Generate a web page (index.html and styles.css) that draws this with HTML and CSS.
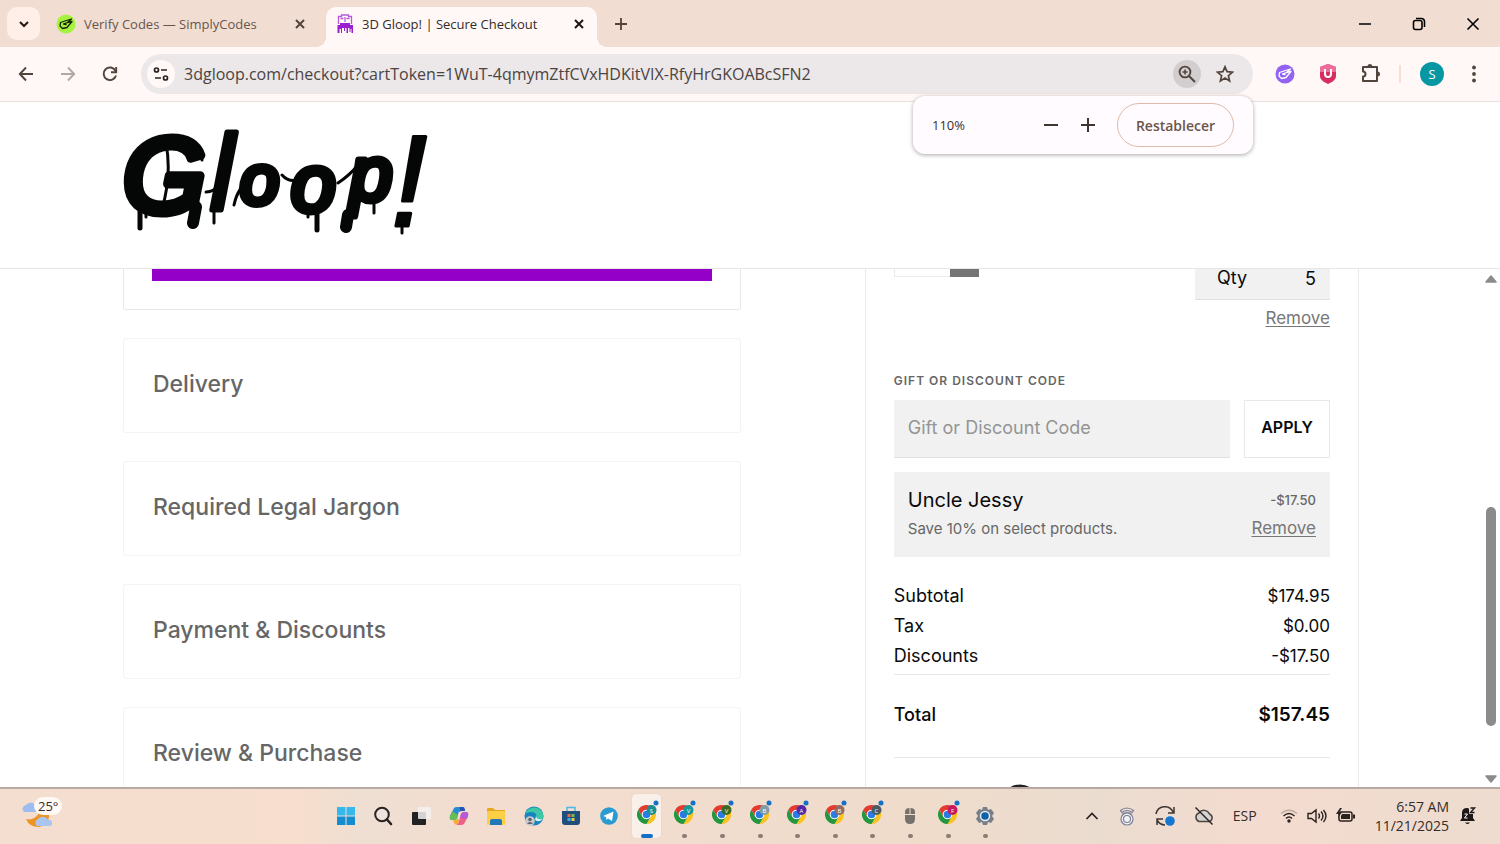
FILE: index.html
```html
<!DOCTYPE html>
<html lang="en">

<head>
    <meta charset="UTF-8" />
    <title>3D Gloop! | Secure Checkout</title>
    <link rel="stylesheet" href="styles.css">
</head>

<body>
    <!-- shared shapes -->
    <svg class="defs" aria-hidden="true">
        <symbol id="chrome" viewBox="0 0 48 48">
            <circle cx="24" cy="24" r="13" fill="#fff" />
            <path fill="#e33b2e" d="M24 12H44.8A24 24 0 0 0 3.2 12L13.6 30A12 12 0 0 1 24 12Z" />
            <path fill="#fcc31e" d="M34.4 30 24 48A24 24 0 0 0 44.8 12H24A12 12 0 0 1 34.4 30Z" />
            <path fill="#23963f" d="M13.6 30 3.2 12A24 24 0 0 0 24 48L34.4 30A12 12 0 0 1 13.6 30Z" />
            <circle cx="24" cy="24" r="9.5" fill="#2a7be4" />
        </symbol>
        <symbol id="hand" viewBox="0 0 20 20">
            <path fill="none" stroke="currentColor" stroke-width="1.3" stroke-linejoin="round" stroke-linecap="round" d="M9 7 4.500 8.500 4 12 6.500 14.500 11 13.500 13.500 10.500M9 7 15.500 5 11.500 8.500 16 7.500 13.500 10.500M11.500 8.500 7.500 10 10 10.500" />
        </symbol>
    </svg>

    <!-- tabs -->
    <div class="tab-strip">
        <button class="tab-search" aria-label="Search tabs">
            <svg width="12" height="12" viewBox="0 0 12 12"><path d="M2 4l4 4 4-4" fill="none" stroke="#221a16" stroke-width="2" /></svg>
        </button>
        <div class="tab">
            <svg class="favicon lime" width="20" height="20" viewBox="0 0 20 20"><circle cx="10" cy="10" r="9.500" fill="#a6f23c" /><use href="#hand" width="20" height="20" /></svg>
            <span class="tab-title">Verify Codes — SimplyCodes</span>
            <button class="close" aria-label="Close tab"><svg width="12" height="12" viewBox="0 0 12 12"><path d="M2 2l8 8M10 2l-8 8" stroke="#51443c" stroke-width="2" /></svg></button>
        </div>
        <div class="tab active">
            <svg class="favicon" width="18" height="20" viewBox="0 0 18 20">
                <path d="M2.500 10V2.500h3V1h7v1.500h3V10M4.500 4.500h3M10.500 4.500h3M9 3v5" fill="none" stroke="#b35cda" stroke-width="1.300" />
                <path d="M4 9h10v2h3v8h-1.500v-4h-1v3h-1v-4h-1.500v5h-1.500v-5H9v3H8v-3H6v5H5v-4H3.500v4H1.500v-8h2.500Z" fill="#9a1fd0" />
            </svg>
            <span class="tab-title">3D Gloop! | Secure Checkout</span>
            <button class="close" aria-label="Close tab"><svg width="12" height="12" viewBox="0 0 12 12"><path d="M2 2l8 8M10 2l-8 8" stroke="#1c1512" stroke-width="2" /></svg></button>
        </div>
        <button class="new-tab" aria-label="New tab">
            <svg width="14" height="14" viewBox="0 0 14 14"><path d="M7 1v12M1 7h12" stroke="#51443c" stroke-width="1.800" /></svg>
        </button>
        <div class="window-buttons">
            <button aria-label="Minimize"><svg width="14" height="14" viewBox="0 0 14 14"><path d="M1 7h12" stroke="#000" stroke-width="1.500" /></svg></button>
            <button aria-label="Restore"><svg width="14" height="14" viewBox="0 0 14 14"><rect x="1.500" y="3.500" width="8.500" height="9" rx="2" fill="none" stroke="#000" stroke-width="1.600" /><path d="M4 1.500h5.500a3 3 0 0 1 3 3V10" fill="none" stroke="#000" stroke-width="1.600" /></svg></button>
            <button aria-label="Close"><svg width="14" height="14" viewBox="0 0 14 14"><path d="M1.500 1.500l11 11M12.500 1.500l-11 11" stroke="#000" stroke-width="1.600" /></svg></button>
        </div>
    </div>

    <!-- toolbar -->
    <div class="toolbar">
        <div class="nav">
            <button aria-label="Back"><svg width="16" height="16" viewBox="0 0 16 16"><path d="M15 8H2M8 1.500 1.800 8 8 14.500" fill="none" stroke="#51443c" stroke-width="1.900" /></svg></button>
            <button aria-label="Forward"><svg width="16" height="16" viewBox="0 0 16 16"><path d="M1 8h13M8 1.500 14.200 8 8 14.500" fill="none" stroke="#b1a8a4" stroke-width="1.900" /></svg></button>
            <button aria-label="Reload"><svg width="16" height="16" viewBox="0 0 16 16"><path d="M14 9.500A6.300 6.300 0 1 1 13.500 4.800L14 6" fill="none" stroke="#51443c" stroke-width="1.900" /><path d="M14.200 1v5.200H9" fill="none" stroke="#51443c" stroke-width="1.900" /></svg></button>
        </div>
        <div class="address">
            <button class="site-info" aria-label="Site information">
                <svg width="16" height="16" viewBox="0 0 16 16" fill="none" stroke="#2a2321" stroke-width="1.700"><circle cx="3.500" cy="4" r="2" /><path d="M8 4h6M2 12h6" /><circle cx="12.500" cy="12" r="2" /></svg>
            </button>
            <input class="url" type="text" aria-label="Address" value="3dgloop.com/checkout?cartToken=1WuT-4qmymZtfCVxHDKitVIX-RfyHrGKOABcSFN2">
            <button class="zoom-button" aria-label="Zoom">
                <svg width="18" height="18" viewBox="0 0 18 18" fill="none" stroke="#51443c" stroke-width="1.900"><circle cx="7" cy="7" r="5.400" /><path d="M11 11l6 6" /><path d="M7 4.500v5M4.500 7h5" stroke-width="1.500" /></svg>
            </button>
            <button class="star" aria-label="Bookmark">
                <svg width="18" height="18" viewBox="0 0 18 18"><path d="M9 1.800l2.100 4.900 5.300.5-4 3.500 1.200 5.200L9 13.100l-4.600 2.800 1.200-5.200-4-3.500 5.300-.5Z" fill="none" stroke="#51443c" stroke-width="1.700" /></svg>
            </button>
        </div>
        <div class="extensions">
            <button aria-label="SimplyCodes"><svg class="white" width="20" height="20" viewBox="0 0 20 20"><circle cx="10" cy="10" r="9.500" fill="#9262f3" /><use href="#hand" width="20" height="20" /></svg></button>
            <button aria-label="Shield"><svg width="18" height="20" viewBox="0 0 18 20"><path d="M9 0l8 3v9c0 4-4 6-8 8-4-2-8-4-8-8V3Z" fill="#d62c62" /><path d="M9 0l8 3v5H1V3Z" fill="#ee6e9a" /><path d="M6 5v5a3 3 0 0 0 6 0V5" fill="none" stroke="#fff" stroke-width="2" /></svg></button>
            <button class="puzzle" aria-label="Extensions"><svg width="20" height="20" viewBox="0 0 20 20"><path d="M2 3h14v14H2v-4.500a2.500 2.500 0 0 0 0-5Z" fill="none" stroke="#51443c" stroke-width="2" stroke-linejoin="round" /><path d="M6.500 2.500a2.500 2.500 0 0 1 5 0ZM16.500 7.500a2.500 2.500 0 0 1 0 5Z" fill="#51443c" /></svg></button>
            <span class="divider"></span>
            <button class="profile" aria-label="Profile">S</button>
            <button class="menu" aria-label="Menu"><svg width="4" height="18" viewBox="0 0 4 18" fill="#51443c"><circle cx="2" cy="2.500" r="1.900" /><circle cx="2" cy="9" r="1.900" /><circle cx="2" cy="15.500" r="1.900" /></svg></button>
        </div>
        <!-- zoom bubble -->
        <div class="zoom-bubble">
            <span>110%</span>
            <button class="step" aria-label="Zoom out"><svg width="16" height="16" viewBox="0 0 16 16"><path d="M1 8h14" stroke="#40342f" stroke-width="2" /></svg></button>
            <button class="step" aria-label="Zoom in"><svg width="16" height="16" viewBox="0 0 16 16"><path d="M1 8h14M8 1v14" stroke="#40342f" stroke-width="2" /></svg></button>
            <button class="reset">Restablecer</button>
        </div>
    </div>

    <header class="site-header">
        <a href="#" aria-label="Gloop!">
            <svg class="logo" width="304" height="108" viewBox="0 0 304 108">
                <g class="logo-text">
                    <text x="-1" y="83" font-size="106" stroke-width="9">G</text>
                    <text x="86" y="81" font-size="108" stroke-width="5">l</text>
                    <text x="116" y="75" font-size="70" stroke-width="7">o</text>
                    <text x="167" y="82" font-size="80" stroke-width="7">o</text>
                    <text x="226" y="71" font-size="76" stroke-width="7">p</text>
                    <text x="267" y="97" font-size="130" stroke-width="3">!</text>
                </g>
                <!-- drips -->
                <g fill="none" stroke="#050606" stroke-linecap="round">
                    <path d="M16 82v17M193 84v17" stroke-width="5" />
                    <path d="M72 78 69 94M224 86 222 98" stroke-width="12" />
                    <path d="M90 80v14M22 84v4M144 46v10M184 84v4M250 72v12M278 98v6M78 22v9" stroke-width="3" />
                    <path d="M42 14q6 32-4 66M82 63q8 0 14-8M110 76q4-18 14-22M158 46q9 10 22 2M214 54q12-8 20-18" stroke-width="3" />
                </g>
            </svg>
        </a>
    </header>

    <div class="page">
        <main class="checkout">
            <div class="steps">
                <section class="step-card current">
                    <button class="continue" aria-label="Continue"></button>
                </section>
                <section class="step-card"><h2>Delivery</h2></section>
                <section class="step-card"><h2>Required Legal Jargon</h2></section>
                <section class="step-card"><h2>Payment &amp; Discounts</h2></section>
                <section class="step-card"><h2>Review &amp; Purchase</h2></section>
            </div>

            <aside class="summary">
                <div class="item">
                    <div class="thumb"><span></span></div>
                    <div class="item-side">
                        <div class="qty">
                            <label for="qty">Qty</label>
                            <input id="qty" type="text" value="5">
                        </div>
                        <a class="remove" href="#">Remove</a>
                    </div>
                </div>

                <label class="code-label" for="code">GIFT OR DISCOUNT CODE</label>
                <div class="code-row">
                    <input id="code" type="text" placeholder="Gift or Discount Code">
                    <button>APPLY</button>
                </div>

                <div class="discount">
                    <div class="discount-line">
                        <span class="discount-name">Uncle Jessy</span>
                        <span class="discount-amount">-$17.50</span>
                    </div>
                    <div class="discount-line">
                        <span class="discount-note">Save 10% on select products.</span>
                        <a class="remove" href="#">Remove</a>
                    </div>
                </div>

                <table class="totals">
                    <tr><th>Subtotal</th><td>$174.95</td></tr>
                    <tr><th>Tax</th><td>$0.00</td></tr>
                    <tr class="last"><th>Discounts</th><td>-$17.50</td></tr>
                    <tr class="total"><th>Total</th><td>$157.45</td></tr>
                </table>
                <svg class="seal" width="40" height="40" viewBox="0 0 40 40"><circle cx="20" cy="20" r="18" fill="none" stroke="#222" stroke-width="3" /></svg>
            </aside>
        </main>

        <div class="scrollbar">
            <svg width="12" height="8" viewBox="0 0 12 8"><path d="M6 1l5 6H1Z" fill="#8b8b8b" stroke="#8b8b8b" stroke-width="1.500" stroke-linejoin="round" /></svg>
            <div class="track"><div class="scroll-thumb"></div></div>
            <svg width="12" height="8" viewBox="0 0 12 8"><path d="M6 7l5-6H1Z" fill="#8b8b8b" stroke="#8b8b8b" stroke-width="1.500" stroke-linejoin="round" /></svg>
        </div>
    </div>

    <!-- taskbar -->
    <footer class="taskbar">
        <div class="weather">
            <svg width="32" height="32" viewBox="0 0 32 32">
                <path d="M4 12a4 4 0 0 1 2-7 6 6 0 0 1 10 1v6Z" fill="#9dbdf0" />
                <path d="M6 19q8 2 13-6h10q1 12-10 14-10 0-13-8Z" fill="#ee9425" />
                <path d="M17 26a4 4 0 0 1 1-7 6 6 0 0 1 10 1 3 3 0 0 1 2 6Z" fill="#a9c5f0" />
            </svg>
            <span class="temp">25°</span>
        </div>

        <nav class="apps">
            <button aria-label="Start"><svg width="20" height="20" viewBox="0 0 20 20"><path d="M1 1h8.500v8.500H1ZM10.500 1H19v8.500h-8.500Z" fill="#35b8ee" /><path d="M1 10.500h8.500V19H1ZM10.500 10.500H19V19h-8.500Z" fill="#138dd0" /></svg></button>
            <button aria-label="Search"><svg width="20" height="20" viewBox="0 0 20 20"><circle cx="9" cy="8.500" r="6.800" fill="#eee3dd" stroke="#29221f" stroke-width="2" /><path d="M14 13.500l4 4.500" stroke="#29221f" stroke-width="2.600" stroke-linecap="round" /></svg></button>
            <button aria-label="Task view"><svg width="20" height="20" viewBox="0 0 20 20"><rect x="1" y="6" width="14" height="13" rx="1" fill="#222" /><rect x="7" y="1" width="13" height="12" rx="1" fill="#f4f2f1" fill-opacity=".85" /></svg></button>
            <button aria-label="Copilot"><svg width="20" height="20" viewBox="0 0 20 20"><path d="M5 2q1-1 3-1h6q-3 0-4 4L8 12q-1 2-3 2H3q-3 0-2-4Z" fill="#268cd8" /><path d="M1 10l2-5 6 4-1 4q-1 1-3 1H3q-3 0-2-4Z" fill="#66bd57" /><path d="M15 18q-1 1-3 1H6q3 0 4-4l2-7q1-2 3-2h2q3 0 2 4Z" fill="#ef5e86" /><path d="M12 8q1-2 3-2h2q3 0 2 4l-1 3-7-1Z" fill="#b45bd7" /><path d="M10 15l-1 3q-2 2-4-1l-1-3h2q2 0 3-2Z" fill="#f5ac3b" /><path d="M11 1h3q2 0 2 4h-3q-2 0-3 1Z" fill="#2554b4" /></svg></button>
            <button aria-label="File Explorer"><svg width="20" height="20" viewBox="0 0 20 20"><path d="M1 3q0-1 1-1h5l2 2h10v14H1Z" fill="#e7a61c" /><rect x="1" y="5" width="18" height="14" rx="1" fill="#fdcf45" /><path d="M4 19v-4q0-2 2-2h8q2 0 2 2v4Z" fill="#2378b9" /></svg></button>
            <button aria-label="Edge"><svg width="20" height="20" viewBox="0 0 20 20"><circle cx="10" cy="10" r="9.500" fill="#1684bf" /><path d="M1 8a9.500 9.500 0 0 1 18.500 2q0 4-4 4-4 0-3-3 0-5-5-5-4 0-6.500 2Z" fill="#3cc8a4" /><path d="M12 10q1 4 7 3-4 4-8 1Z" fill="#d7f2ed" /><circle cx="6" cy="15" r="4.800" fill="#c8c9cc" /><circle cx="6" cy="13.500" r="1.800" fill="#62646a" /><path d="M3 18q3-4 6 0Z" fill="#62646a" /></svg></button>
            <button aria-label="Store"><svg width="20" height="20" viewBox="0 0 20 20"><path d="M6 5V1.500h8V5" fill="none" stroke="#4db9e6" stroke-width="1.500" /><path d="M1 5h18v11q0 3-3 3H4q-3 0-3-3Z" fill="#204e7c" /><path d="M6.500 8h3v3h-3Z" fill="#ed6844" /><path d="M10.500 8h3v3h-3Z" fill="#79bd49" /><path d="M6.500 12h3v3h-3Z" fill="#40acec" /><path d="M10.500 12h3v3h-3Z" fill="#f4c645" /></svg></button>
            <button aria-label="Telegram"><svg width="20" height="20" viewBox="0 0 20 20"><circle cx="10" cy="10" r="8.800" fill="#289bd3" /><path d="M4 10l10.500-4.500-1.500 9.500-4-2.500L7.500 14l-.5-3Z" fill="#fff" /></svg></button>
            <button class="running open" aria-label="Chrome S"><svg width="24" height="28" viewBox="0 0 24 28"><use href="#chrome" x="2" y="6" width="19" height="19" /><circle cx="16.500" cy="11" r="5" fill="#1b8f91" /><text x="16.500" y="13.500">S</text><circle cx="21" cy="4" r="2.500" fill="#1470c8" /></svg></button>
            <button class="running" aria-label="Chrome V"><svg width="24" height="28" viewBox="0 0 24 28"><use href="#chrome" x="2" y="6" width="19" height="19" /><circle cx="16.500" cy="11" r="5" fill="#14999b" /><text x="16.500" y="13.500">V</text><circle cx="21" cy="4" r="2.500" fill="#1470c8" /></svg></button>
            <button class="running" aria-label="Chrome V"><svg width="24" height="28" viewBox="0 0 24 28"><use href="#chrome" x="2" y="6" width="19" height="19" /><circle cx="16.500" cy="11" r="5" fill="#386a20" /><text x="16.500" y="13.500">V</text><circle cx="21" cy="4" r="2.500" fill="#1470c8" /></svg></button>
            <button class="running" aria-label="Chrome B"><svg width="24" height="28" viewBox="0 0 24 28"><use href="#chrome" x="2" y="6" width="19" height="19" /><circle cx="16.500" cy="11" r="5" fill="#829ca6" /><text x="16.500" y="13.500">B</text><circle cx="21" cy="4" r="2.500" fill="#1470c8" /></svg></button>
            <button class="running" aria-label="Chrome A"><svg width="24" height="28" viewBox="0 0 24 28"><use href="#chrome" x="2" y="6" width="19" height="19" /><circle cx="16.500" cy="11" r="5" fill="#5427a6" /><text x="16.500" y="13.500">A</text><circle cx="21" cy="4" r="2.500" fill="#1470c8" /></svg></button>
            <button class="running" aria-label="Chrome B"><svg width="24" height="28" viewBox="0 0 24 28"><use href="#chrome" x="2" y="6" width="19" height="19" /><circle cx="16.500" cy="11" r="5" fill="#956b60" /><text x="16.500" y="13.500">B</text><circle cx="21" cy="4" r="2.500" fill="#1470c8" /></svg></button>
            <button class="running" aria-label="Chrome C"><svg width="24" height="28" viewBox="0 0 24 28"><use href="#chrome" x="2" y="6" width="19" height="19" /><circle cx="16.500" cy="11" r="5" fill="#4b5b63" /><text x="16.500" y="13.500">C</text><circle cx="21" cy="4" r="2.500" fill="#1470c8" /></svg></button>
            <button class="running" aria-label="Mouse"><svg width="20" height="20" viewBox="0 0 20 20" fill="#77716b"><path d="M9.500 2v6H5V6q0-4 4.500-4ZM10.500 2v6H15V6q0-4-4.500-4ZM5 9h10v4q0 5-5 5t-5-5Z" /></svg></button>
            <button class="running" aria-label="Chrome F"><svg width="24" height="28" viewBox="0 0 24 28"><use href="#chrome" x="2" y="6" width="19" height="19" /><circle cx="16.500" cy="11" r="5" fill="#c51a60" /><text x="16.500" y="13.500">F</text><circle cx="21" cy="4" r="2.500" fill="#1470c8" /></svg></button>
            <button class="running" aria-label="Settings"><svg width="20" height="20" viewBox="0 0 20 20"><path d="M8 1h4l1 3 3-1 3 4-2 3 2 3-3 4-3-1-1 3H8l-1-3-3 1-3-4 2-3-2-3 3-4 3 1Z" fill="#777f88" /><circle cx="10" cy="10" r="4.500" fill="#1261a5" stroke="#e2edf5" stroke-width="1.500" /></svg></button>
        </nav>

        <div class="tray">
            <button aria-label="Show hidden icons"><svg width="14" height="14" viewBox="0 0 14 14"><path d="M1.500 10 7 4.500l5.500 5.500" fill="none" stroke="#29221f" stroke-width="1.700" /></svg></button>
            <button aria-label="Webcam"><svg width="18" height="20" viewBox="0 0 18 20" fill="none" stroke="#7b8098" stroke-width="1.200"><circle cx="9" cy="13" r="6" fill="#f4f1f5" /><circle cx="9" cy="13" r="3.500" /><path d="M2.500 4.500q6.500-5 13 0l-1.500 2q-5-4-10 0ZM4.500 8q4.500-3 9 0" /></svg></button>
            <button aria-label="Update"><svg width="20" height="20" viewBox="0 0 20 20" fill="none" stroke="#3d3532" stroke-width="1.500"><path d="M1 8a9 9 0 0 1 17-2M19 1v6h-6M2 19v-6h6M2 14q3 5 8 5" /><circle cx="15" cy="15" r="4.800" fill="#1676d1" stroke="none" /></svg></button>
            <button aria-label="OneDrive"><svg width="20" height="20" viewBox="0 0 20 20"><path d="M5 15.500a4.500 4.500 0 0 1 0-8.500 6 6 0 0 1 10.500 1 4 4 0 0 1 0 7.500Z" fill="#d4d1cf" stroke="#4b4542" stroke-width="1.500" /><path d="M1.500 1.500l17 17" stroke="#29221f" stroke-width="1.500" /></svg></button>
            <button class="lang">ESP</button>
            <button class="status" aria-label="Network, volume, battery">
                <svg width="18" height="18" viewBox="0 0 18 18" fill="none" stroke="#29221f" stroke-width="1.400"><path d="M1 6.500q8-6.500 16 0" stroke="#b9aaa1" /><path d="M3.500 9q5.500-5 11 0M6 11.500q3-3 6 0" /><circle cx="9" cy="14" r="1" fill="#29221f" /></svg>
                <svg width="20" height="18" viewBox="0 0 20 18" fill="none" stroke="#29221f" stroke-width="1.400"><path d="M1 6.500h3.500L9 3v12l-4.500-3.500H1ZM11.500 6.500q2 2.500 0 5M14 4.500q4 4.500 0 9M16.500 3q5 6 0 12" /></svg>
                <svg width="20" height="18" viewBox="0 0 20 18"><rect x="3" y="5" width="13" height="9" rx="2" fill="none" stroke="#29221f" stroke-width="1.500" /><path d="M6 7h8v5H5V9ZM17 7.500h2v4h-2Z" fill="#29221f" /><path d="M4 1 0 7h3l-1 4 4-6H3.500L6 1Z" fill="#29221f" /></svg>
            </button>
            <button class="clock"><span>6:57 AM</span><span>11/21/2025</span></button>
            <button aria-label="Notifications"><svg width="18" height="20" viewBox="0 0 18 20"><path d="M1 15l2-3V7q0-5 5-5 1 0 2 .5V8h4v4l2 3Z" fill="#1d1817" /><path d="M6 16.500h5q-2.500 3-5 0Z" fill="#1d1817" /><path d="M11.500 2h4l-4 4.500h4" fill="none" stroke="#1d1817" stroke-width="1.400" /><path d="M5.500 8h3l-3 4h3" fill="none" stroke="#fff" stroke-width="1" /></svg></button>
        </div>
    </footer>
</body>

</html>
```

FILE: styles.css
```css
* {
    box-sizing: border-box;
}

body {
    margin: 0;
    height: 100vh;
    display: flex;
    flex-direction: column;
    overflow: hidden;
    background: #fff;
    font-family: Inter, "Liberation Sans", sans-serif;
}

button {
    padding: 0;
    border: none;
    background: none;
    font: inherit;
    color: inherit;
    cursor: pointer;
}

button,
svg {
    flex: none;
}

svg {
    display: block;
}

.defs {
    position: absolute;
    width: 0;
    height: 0;
}

.tab-strip,
.toolbar,
.taskbar {
    flex: none;
    display: flex;
    align-items: center;
    font-family: "Open Sans", "Noto Sans", sans-serif;
}

/* tabs */
.tab-strip {
    height: 47px;
    padding-left: 7px;
    background: #f2ddd3;
    font-size: 13px;
}

.tab-search {
    width: 33px;
    height: 33px;
    border-radius: 10px;
    background: #ffefe8;
    display: grid;
    place-items: center;
}

.tab {
    display: flex;
    align-items: center;
    height: 40px;
    width: 271px;
    margin-top: 7px;
    padding: 0 12px 6px 10px;
    color: #67564d;
}

.tab:not(.active) {
    margin-left: 6px;
    width: 280px;
    padding: 0 20px 6px 10px;
}

.tab.active {
    position: relative;
    border-radius: 10px 10px 0 0;
    background: #fff8f6;
    color: #342b27;
}

.tab.active::before,
.tab.active::after {
    content: "";
    position: absolute;
    bottom: 0;
    width: 10px;
    height: 10px;
}

.tab.active::before {
    right: 100%;
    background: radial-gradient(circle at 0 0, transparent 10px, #fff8f6 10px);
}

.tab.active::after {
    left: 100%;
    background: radial-gradient(circle at 100% 0, transparent 10px, #fff8f6 10px);
}

.lime {
    color: #17220b;
}

.white {
    color: #fff;
}

.tab-title {
    flex: 1;
    margin-left: 8px;
    white-space: nowrap;
}

.new-tab {
    margin-left: 17px;
}

.window-buttons {
    margin-left: auto;
    display: flex;
}

.window-buttons button {
    width: 54px;
    height: 47px;
    display: grid;
    place-items: center;
}

/* toolbar */
.toolbar {
    position: relative;
    height: 55px;
    padding-right: 22px;
    background: #fff8f6;
    border-bottom: 1px solid #e8e2df;
}

.nav {
    display: flex;
    gap: 26px;
    padding: 0 23px 0 18px;
}

.address {
    flex: 1;
    display: flex;
    align-items: center;
    height: 40px;
    padding: 0 14px 0 6px;
    border-radius: 20px;
    background: #ece7e8;
}

.site-info,
.zoom-button,
.star {
    width: 28px;
    height: 28px;
    border-radius: 14px;
    display: grid;
    place-items: center;
}

.site-info {
    background: #fff8f6;
}

.zoom-button {
    margin-right: 10px;
    background: #d2cdce;
}

.url {
    flex: 1;
    min-width: 0;
    padding: 0;
    margin-left: 9px;
    border: none;
    background: none;
    font-family: inherit;
    font-size: 16px;
    color: #4b4442;
}

.extensions {
    display: flex;
    align-items: center;
    padding-left: 22px;
}

.extensions button {
    margin-right: 24px;
}

.extensions .puzzle {
    margin-right: 18px;
}

.divider {
    width: 2px;
    height: 18px;
    margin-right: 19px;
    background: #f9ded1;
}

.extensions .profile {
    width: 24px;
    height: 24px;
    border-radius: 12px;
    background: #0797a2;
    color: #fff;
    font-size: 13px;
    margin-right: 28px;
}

.extensions .menu {
    margin-right: 2px;
}

.zoom-bubble {
    position: absolute;
    top: 49px;
    right: 247px;
    z-index: 2;
    display: flex;
    align-items: center;
    width: 340px;
    height: 58px;
    padding: 0 19px;
    border-radius: 12px;
    background: #fffbff;
    box-shadow: 0 1px 4px rgba(0, 0, 0, 0.35);
    font-size: 13px;
    color: #3b302b;
}

.zoom-bubble span {
    flex: 1;
}

.step {
    margin-right: 21px;
}

.reset {
    width: 117px;
    height: 44px;
    border: 1px solid #dfbbaa;
    border-radius: 22px;
    font-size: 14px;
    font-weight: 600;
    color: #6b564b;
}

/* shop header */
.site-header {
    flex: none;
    height: 167px;
    padding: 27px 124px;
    border-bottom: 1px solid #e6e6e6;
}

.site-header a {
    display: inline-block;
}

.logo {
    overflow: visible;
}

.logo-text {
    font-family: "Liberation Sans", sans-serif;
    font-style: italic;
    fill: #050606;
    stroke: #050606;
    stroke-linejoin: round;
}

/* checkout */
.page {
    flex: 1;
    min-height: 0;
    display: flex;
    overflow: hidden;
}

.checkout {
    flex: 1;
    display: grid;
    grid-template-columns: 5fr 4fr;
    gap: 124px;
    padding: 0 126px 0 123px;
}

.step-card {
    height: 95px;
    margin-bottom: 28px;
    padding: 0 29px 3px;
    border: 1px solid #f3f3f3;
    border-radius: 3px;
    display: flex;
    align-items: center;
}

.step-card.current {
    height: 41px;
    padding: 0 28px 28px;
    border-color: #e8e8e8;
    border-top: none;
    border-radius: 0 0 3px 3px;
}

.step-card h2 {
    margin: 0;
    font-size: 23px;
    font-weight: 500;
    color: #666;
}

.continue {
    width: 100%;
    height: 12px;
    background: #9400c8;
}

.summary {
    padding: 0 28px;
    border: solid #ebebeb;
    border-width: 0 1px;
    font-size: 18px;
    color: #0a0a0a;
}

.item {
    display: flex;
    justify-content: space-between;
    align-items: flex-start;
}

.thumb {
    display: flex;
    justify-content: flex-end;
    width: 85px;
    height: 8px;
    border: solid #ebebeb;
    border-width: 0 0 1px 1px;
}

.thumb span {
    width: 29px;
    height: 8px;
    background: #757575;
}

.item-side {
    display: flex;
    flex-direction: column;
    align-items: flex-end;
}

.qty {
    display: flex;
    align-items: center;
    justify-content: space-between;
    width: 135px;
    height: 31px;
    padding: 0 14px 12px 22px;
    border-bottom: 1px solid #e0e0e0;
    background: #f1f1f1;
    line-height: 18px;
}

.qty input {
    width: 40px;
    height: 18px;
    padding: 0;
    border: none;
    background: none;
    font: inherit;
    color: inherit;
    text-align: right;
}

.remove {
    font-size: 17px;
    line-height: 22px;
    color: #777;
    text-decoration-thickness: 1px;
    text-underline-offset: 2px;
}

.item .remove {
    margin-top: 7px;
}

.code-label {
    display: block;
    margin: 44px 0 11px;
    font-size: 12px;
    line-height: 16px;
    font-weight: 600;
    letter-spacing: 1px;
    color: #666;
}

.code-row {
    display: flex;
    gap: 14px;
}

.code-row input {
    flex: 1;
    min-width: 0;
    height: 58px;
    padding: 0 14px 2px;
    border: none;
    border-bottom: 1px solid #e0e0e0;
    background: #f1f1f1;
    font: inherit;
}

.code-row input::placeholder {
    color: #949494;
}

.code-row button {
    width: 86px;
    height: 58px;
    padding-bottom: 5px;
    border: 1px solid #e8e8e8;
    font-size: 16px;
    font-weight: 600;
}

.discount {
    height: 85px;
    margin: 14px 0 24px;
    padding: 14px;
    background: #f1f1f1;
}

.discount-line {
    display: flex;
    justify-content: space-between;
    align-items: center;
    height: 28px;
}

.discount-name {
    font-size: 20px;
}

.discount-amount {
    font-size: 13px;
    font-weight: 500;
    color: #666;
}

.discount-note {
    font-size: 15px;
    color: #666;
}

.totals {
    width: 100%;
    border-collapse: collapse;
    line-height: 30px;
}

.totals th,
.totals td {
    padding: 0;
    font-weight: 400;
    text-align: left;
}

.totals td {
    font-size: 17px;
    text-align: right;
}

.totals .last th,
.totals .last td {
    padding-bottom: 3px;
}

.totals .total th,
.totals .total td {
    height: 83px;
    padding-bottom: 2px;
    border: solid #e8e8e8;
    border-width: 1px 0;
    font-weight: 500;
}

.totals .total td {
    font-size: 19px;
    font-weight: 600;
}

.seal {
    margin: 26px 0 0 106px;
}

.scrollbar {
    flex: none;
    width: 15px;
    padding: 6px 0 4px;
    display: flex;
    flex-direction: column;
    gap: 4px;
}

.track {
    flex: 1;
    display: flex;
    flex-direction: column;
    padding: 220px 0 45px 1px;
}

.scroll-thumb {
    flex: 1;
    width: 10px;
    border-radius: 5px;
    background: #8b8b8b;
}

/* taskbar */
.taskbar {
    position: relative;
    height: 57px;
    padding-bottom: 2px;
    border-top: 2px solid #b8aaa2;
    background: linear-gradient(90deg, #f4decf, #f7dece 20%, #eedfd2 24%, #f3ddd0 32%, #efdccb 62%, #ebdcd0 73%, #f4dbcf 84%, #eddccf);
    color: #352c28;
    font-size: 14px;
}

.weather {
    position: relative;
    width: 327px;
    padding-left: 20px;
}

.temp {
    position: absolute;
    top: -3px;
    left: 34px;
    padding: 0 4px;
    border-radius: 9px;
    background: #fff9f6;
    font-size: 13px;
    line-height: 18px;
}

.apps {
    display: grid;
    grid-template-columns: repeat(18, 1fr);
    width: 677px;
}

.apps button {
    position: relative;
    height: 44px;
    display: grid;
    place-items: center;
}

.apps text {
    font-size: 6px;
    fill: #fff;
    text-anchor: middle;
}

.apps svg[height="28"] {
    margin-bottom: 6px;
}

.running::after {
    content: "";
    position: absolute;
    bottom: 0;
    left: 50%;
    width: 5px;
    height: 4px;
    margin-left: -2px;
    border-radius: 2px;
    background: #8b7d74;
}

.open {
    margin: 0 4px;
    border-radius: 4px;
    background: #faf0ea;
    box-shadow: 0 0 1px #c9b9ae;
}

.open::after {
    width: 12px;
    margin-left: -6px;
    background: #1470c8;
}

.tray {
    display: flex;
    align-items: center;
    gap: 19px;
    margin-left: auto;
    padding-right: 23px;
}

.status {
    display: flex;
    align-items: center;
    gap: 9px;
    margin-left: 4px;
}

.clock {
    display: flex;
    flex-direction: column;
    text-align: right;
    line-height: 19px;
}

.tray .clock {
    margin-right: -9px;
}
```
